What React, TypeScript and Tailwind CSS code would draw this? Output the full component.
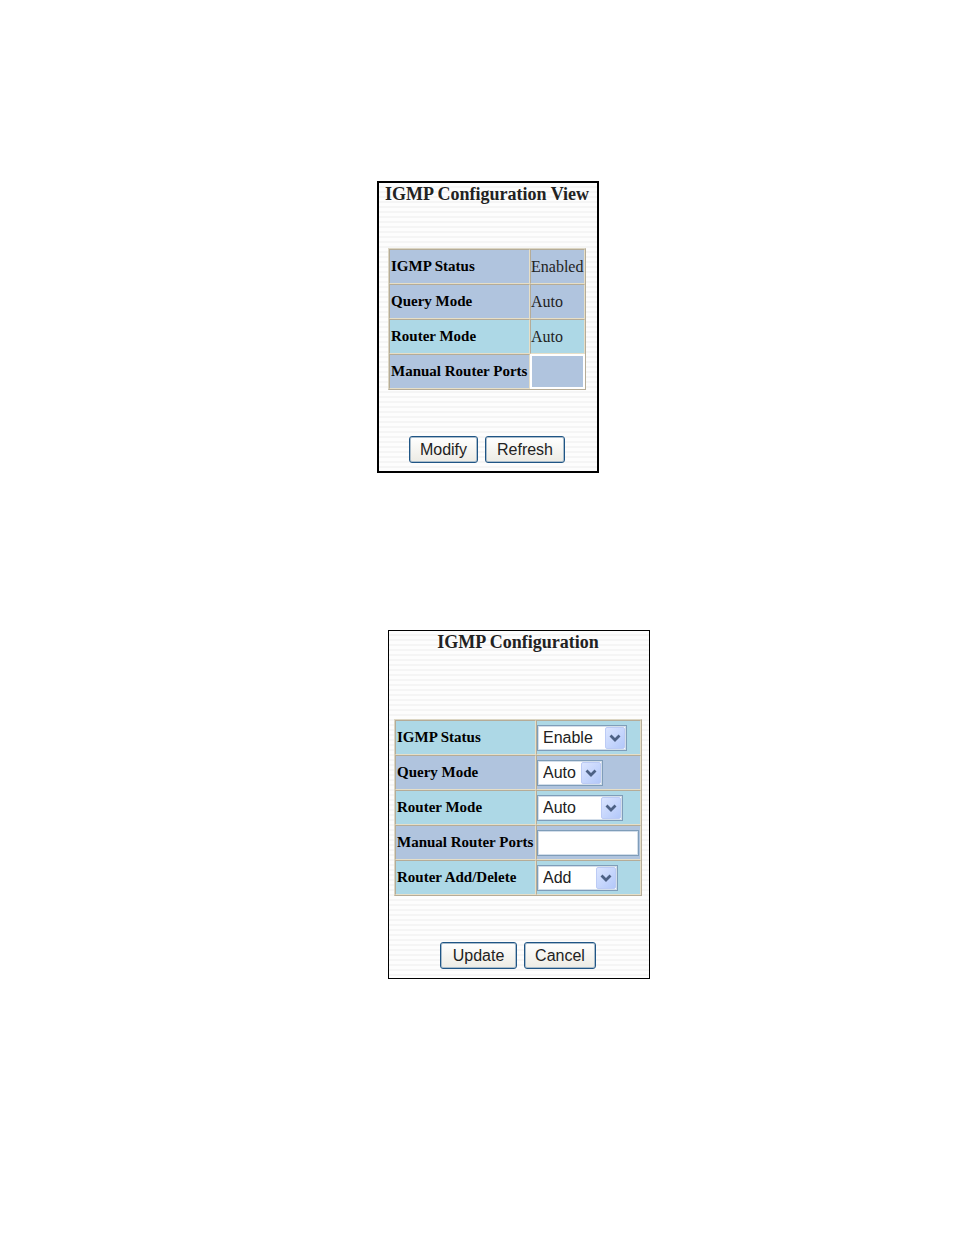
import type { ReactNode } from 'react';
import clsx from 'clsx';

const STRIPES = 'bg-[repeating-linear-gradient(to_bottom,#fdfdfd_0px,#fdfdfd_3px,#f5f5f5_3px,#f5f5f5_5px)]';
const CELL = 'h-[35px] border border-t-[#b5ac98] border-l-[#b5ac98] border-r-[#e6dfc8] border-b-[#e6dfc8]';
const TABLE = 'border-separate border-spacing-0 border border-t-[#dcd6c4] border-l-[#dcd6c4] border-r-[#b5ac98] border-b-[#b5ac98]';

const viewRows = [
    { label: 'IGMP Status', value: 'Enabled', light: false },
    { label: 'Query Mode', value: 'Auto', light: false },
    { label: 'Router Mode', value: 'Auto', light: true },
    { label: 'Manual Router Ports', value: '', light: false },
];

function Button({ children, className }: { children: ReactNode; className: string }) {
    return (
        <button
            type="button"
            className={clsx(
                'h-[27px] rounded-[3px] border border-[#1f5585] bg-linear-to-b from-white to-[#ecebe4] font-["Liberation_Sans",sans-serif] text-base leading-[24px] text-[#222] inset-shadow-[0_0_0_1px_#a9bccb]',
                className
            )}
        >
            {children}
        </button>
    );
}

interface SelectProps {
    id: string;
    options: string[];
    className: string;
}

function Select({ id, options, className }: SelectProps) {
    return (
        <div className={clsx('relative h-[26px]', className)}>
            <select
                id={id}
                className="block h-full w-full appearance-none border border-[#7f9db9] bg-white pl-[5px] font-['Liberation_Sans',sans-serif] text-base leading-[24px] text-[#222] inset-shadow-[0_0_0_1px_#d3deea]"
            >
                {options.map((option) => (
                    <option key={option}>{option}</option>
                ))}
            </select>
            <span className="pointer-events-none absolute top-[2px] right-[2px] flex h-[22px] w-5 items-center justify-center rounded-xs border border-[#bccbf5] bg-linear-to-br from-[#dbe5ff] to-[#b3c8f9]">
                <svg width="12" height="10" viewBox="0 0 12 10" fill="none">
                    <path d="M1.5 2.5 L6 7 L10.5 2.5" stroke="#4d6185" strokeWidth="2.8" />
                </svg>
            </span>
        </div>
    );
}

function FormRow({ id, label, light, children }: { id: string; label: string; light?: boolean; children: ReactNode }) {
    return (
        <tr className={light ? 'bg-[#add8e6]' : 'bg-[#b0c4de]'}>
            <th scope="row" className={clsx(CELL, 'w-[141px] pl-px text-left text-[15px] font-bold whitespace-nowrap')}>
                <label htmlFor={id}>{label}</label>
            </th>
            <td className={clsx(CELL, 'w-[105px]')}>{children}</td>
        </tr>
    );
}

function ConfigurationView() {
    return (
        <section className={clsx('flex w-[222px] flex-col items-center border-2 border-black pr-[2px] pb-2', STRIPES)}>
            <h2 className="mb-[43px] text-lg leading-[22px] font-bold whitespace-nowrap text-[#222]">IGMP Configuration View</h2>
            <table className={TABLE}>
                <tbody>
                    {viewRows.map((row) => (
                        <tr key={row.label} className={row.light ? 'bg-[#add8e6]' : 'bg-[#b0c4de]'}>
                            <th scope="row" className={clsx(CELL, 'w-[141px] pl-px text-left text-[15px] font-bold whitespace-nowrap')}>
                                {row.label}
                            </th>
                            <td className={clsx(row.value ? CELL : 'h-[35px] border-2 border-white', 'w-[55px] text-base text-[#222]')}>
                                {row.value}
                            </td>
                        </tr>
                    ))}
                </tbody>
            </table>
            <div className="mt-[46px] flex gap-[7px]">
                <Button className="w-[69px]">Modify</Button>
                <Button className="w-20">Refresh</Button>
            </div>
        </section>
    );
}

function ConfigurationForm() {
    return (
        <form className={clsx('flex w-[262px] flex-col items-center border border-black pr-[2px] pb-[9px]', STRIPES)}>
            <h2 className="mb-[66px] text-lg leading-[22px] font-bold text-[#222]">IGMP Configuration</h2>
            <table className={TABLE}>
                <tbody>
                    <FormRow id="igmp-status" label="IGMP Status" light>
                        <Select id="igmp-status" options={['Enable', 'Disable']} className="w-[90px]" />
                    </FormRow>
                    <FormRow id="query-mode" label="Query Mode">
                        <Select id="query-mode" options={['Auto']} className="w-[66px]" />
                    </FormRow>
                    <FormRow id="router-mode" label="Router Mode" light>
                        <Select id="router-mode" options={['Auto', 'Manual']} className="w-[86px]" />
                    </FormRow>
                    <FormRow id="router-ports" label="Manual Router Ports">
                        <input
                            id="router-ports"
                            type="text"
                            className="block h-[26px] w-[102px] border border-[#7f9db9] bg-white px-[5px] font-['Liberation_Sans',sans-serif] text-base inset-shadow-[0_0_0_1px_#d3deea]"
                        />
                    </FormRow>
                    <FormRow id="router-action" label="Router Add/Delete" light>
                        <Select id="router-action" options={['Add', 'Delete']} className="w-[81px]" />
                    </FormRow>
                </tbody>
            </table>
            <div className="mt-[46px] flex gap-[7px]">
                <Button className="w-[77px]">Update</Button>
                <Button className="w-[72px]">Cancel</Button>
            </div>
        </form>
    );
}

export default function App() {
    return (
        <main className="flex min-h-screen flex-col items-center bg-white pt-[181px] font-['Liberation_Serif',serif] text-black">
            <div className="pl-[22px]">
                <ConfigurationView />
            </div>
            <div className="mt-[157px] pl-[84px]">
                <ConfigurationForm />
            </div>
        </main>
    );
}
